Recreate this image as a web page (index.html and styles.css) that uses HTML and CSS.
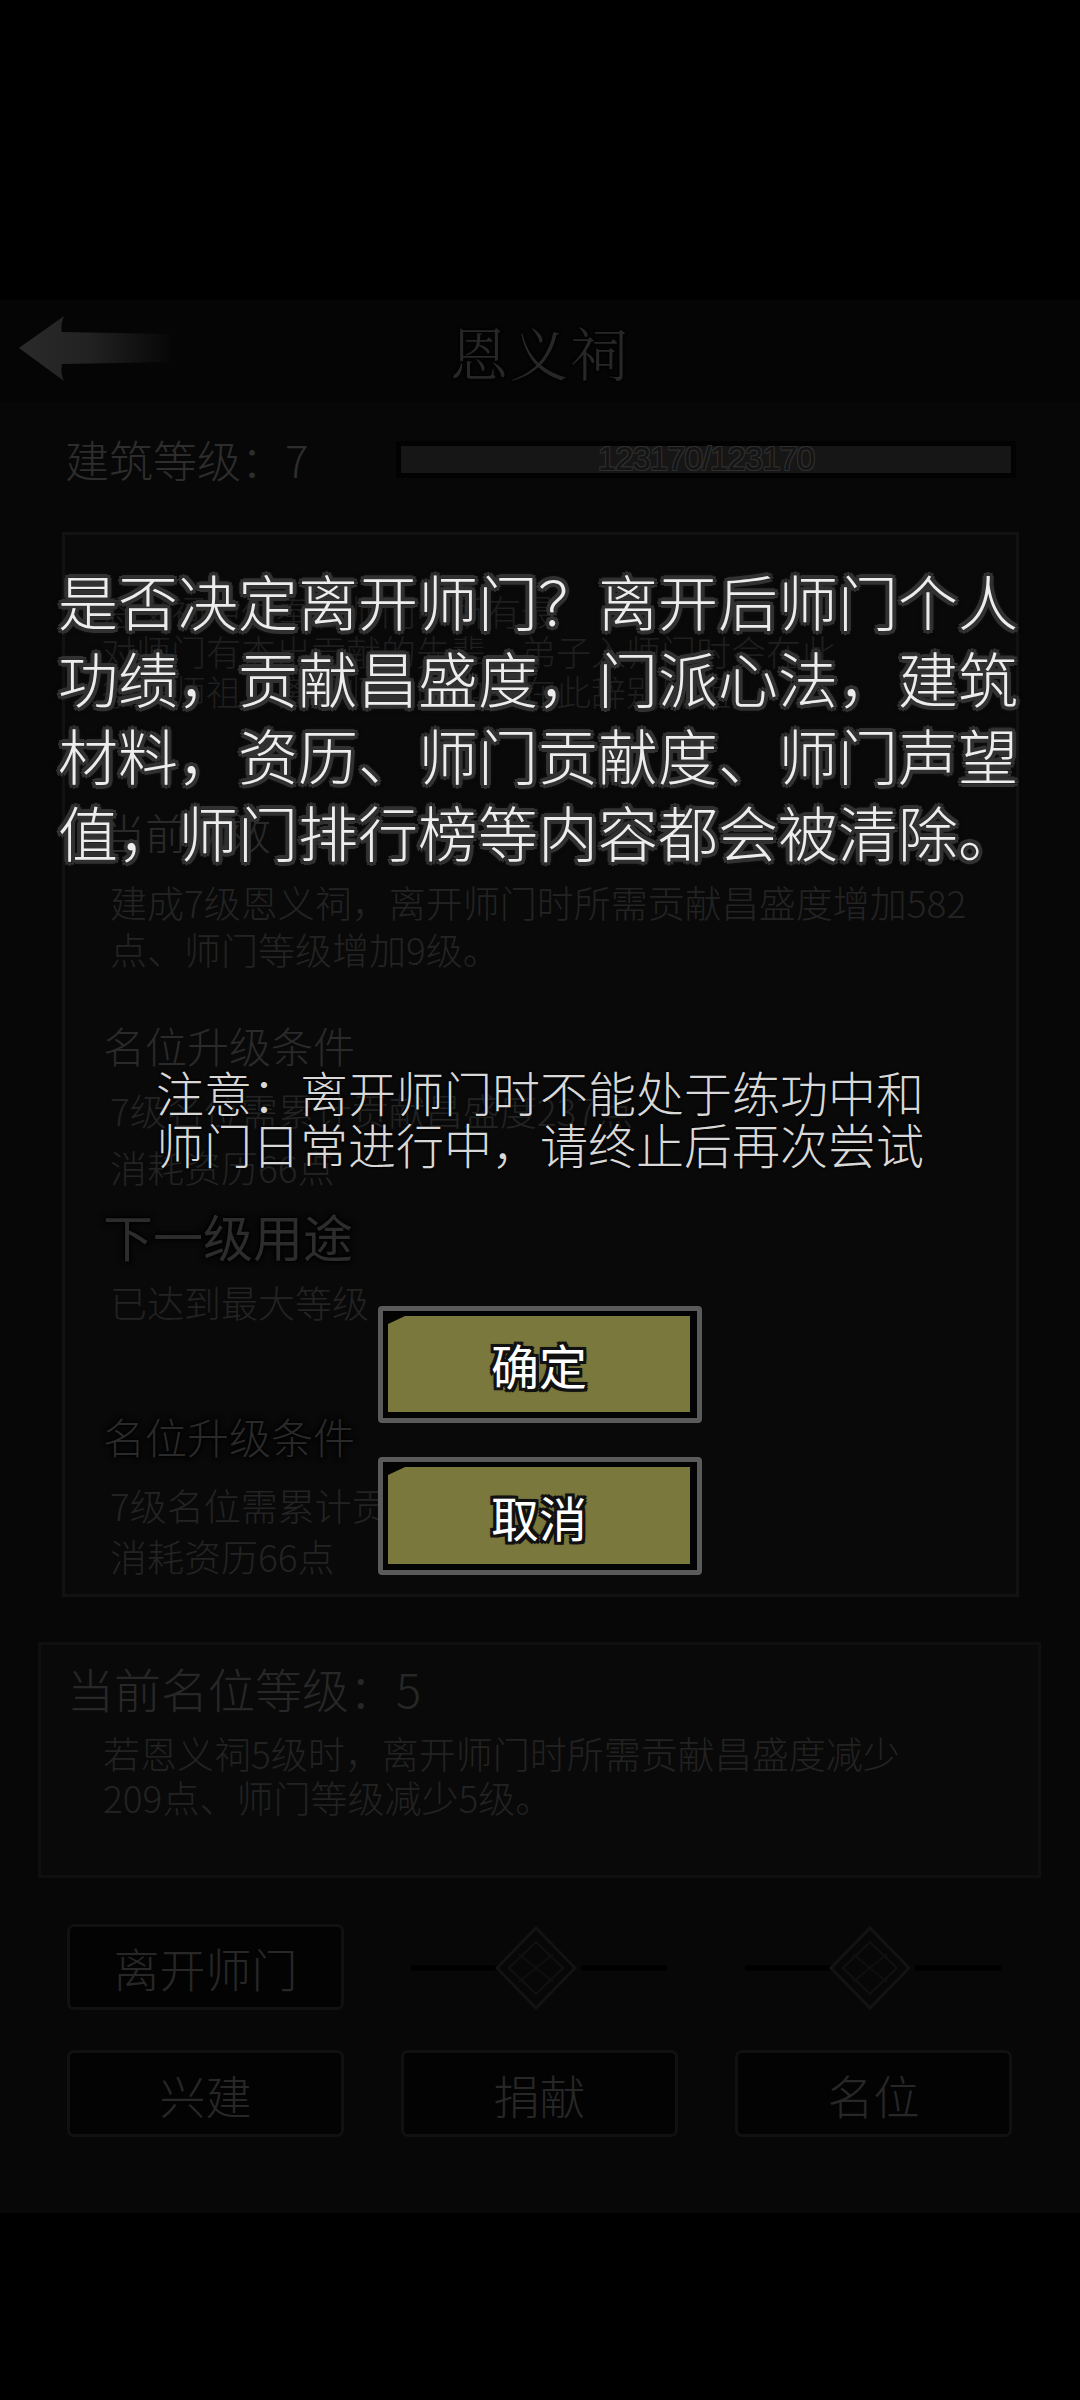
FILE: index.html
```html
<!DOCTYPE html>
<html lang="zh-CN">
<head>
<meta charset="utf-8">
<title>恩义祠</title>
<link rel="stylesheet" href="styles.css">
</head>
<body>
<div class="screen">
  <div class="statusbar"></div>
  <div class="game">
    <header class="hdr">
      <svg class="back" width="180" height="102" viewBox="0 0 180 102">
        <defs>
          <linearGradient id="ag" x1="0" y1="0" x2="1" y2="0">
            <stop offset="0" stop-color="#2a2a2a"/>
            <stop offset="0.45" stop-color="#222"/>
            <stop offset="1" stop-color="#070707"/>
          </linearGradient>
        </defs>
        <path d="M19 48 L64 16 Q60 26 62 32 L170 34 L170 62 L62 64 Q60 72 64 81 Z" fill="url(#ag)"/>
      </svg>
      <h1 class="title">恩义祠</h1>
      <span></span>
    </header>
    <main class="content">
      <div class="levelrow">
        <div class="lvl">建筑等级：7</div>
        <div class="bar"><span>123170/123170</span></div>
      </div>
      <section class="panel">
        <p class="intro">恩义祠中供奉着师门中所有最<br>对师门有杰出贡献的先辈。弟子入师门时会在此<br>祭拜师祖，离开师门时也会在此辞别师祖。</p>
        <h2 class="h h-effect">当前功效</h2>
        <p class="body b-effect">建成7级恩义祠，离开师门时所需贡献昌盛度增加582<br>点、师门等级增加9级。</p>
        <h2 class="h h-cond1">名位升级条件</h2>
        <p class="body b-c1a">7级名位需累计贡献昌盛度237点</p>
        <p class="body b-c1b">消耗资历66点</p>
        <h2 class="h halo h-next">下一级用途</h2>
        <p class="body b-next">已达到最大等级</p>
        <h2 class="h halo h-cond2">名位升级条件</h2>
        <p class="body b-c2a">7级名位需累计贡献昌盛度237点</p>
        <p class="body b-c2b">消耗资历66点</p>
      </section>
      <section class="panel2">
        <h2 class="rank">当前名位等级：5</h2>
        <p class="rankdesc">若恩义祠5级时，离开师门时所需贡献昌盛度减少<br>209点、师门等级减少5级。</p>
      </section>
      <div class="actions">
        <button class="act">离开师门</button>
        <svg class="divider" width="277" height="86" viewBox="0 0 277 86">
          <line x1="10" y1="44" x2="96" y2="44" stroke="#000" stroke-width="5"/>
          <line x1="180" y1="44" x2="266" y2="44" stroke="#000" stroke-width="5"/>
          <path d="M135 4 L174 44 L135 84 L96 44 Z" fill="none" stroke="#131313" stroke-width="3"/>
          <path d="M135 18 L162 44 L135 70 L108 44 Z" fill="none" stroke="#111" stroke-width="2"/>
          <path d="M118 30 L152 58 M152 30 L118 58" stroke="#0f0f0f" stroke-width="2"/>
        </svg>
        <svg class="divider" width="277" height="86" viewBox="0 0 277 86">
          <line x1="10" y1="44" x2="96" y2="44" stroke="#000" stroke-width="5"/>
          <line x1="180" y1="44" x2="266" y2="44" stroke="#000" stroke-width="5"/>
          <path d="M135 4 L174 44 L135 84 L96 44 Z" fill="none" stroke="#131313" stroke-width="3"/>
          <path d="M135 18 L162 44 L135 70 L108 44 Z" fill="none" stroke="#111" stroke-width="2"/>
          <path d="M118 30 L152 58 M152 30 L118 58" stroke="#0f0f0f" stroke-width="2"/>
        </svg>
        <button class="act">兴建</button>
        <button class="act">捐献</button>
        <button class="act">名位</button>
      </div>
    </main>
  </div>
</div>

<div class="overlay">
  <p class="msg">是否决定离开师门？离开后师门个人<br>功绩，贡献昌盛度，门派心法，建筑<br>材料，资历、师门贡献度、师门声望<br>值，师门排行榜等内容都会被清除。</p>
  <p class="note">注意：离开师门时不能处于练功中和<br>师门日常进行中，请终止后再次尝试</p>
  <button class="dlgbtn ok"><span class="face">确定</span></button>
  <button class="dlgbtn cancel"><span class="face">取消</span></button>
</div>
</body>
</html>
```

FILE: styles.css
```css
* { box-sizing: border-box; }

html, body {
  margin: 0;
  padding: 0;
}

body {
  width: 1080px;
  height: 2400px;
  overflow: hidden;
  background: #000;
  position: relative;
  font-family: "Noto Sans CJK SC", "Noto Sans", sans-serif;
  font-weight: 300;
}

p, h1, h2 { margin: 0; font-weight: 300; }

.statusbar {
  height: 300px;
  background: #000;
}

.game {
  height: 1913px;
  background: #060606;
}

/* header */
.hdr {
  height: 102px;
  display: grid;
  grid-template-columns: 1fr auto 1fr;
  align-items: center;
  background: #050505;
}

.back { display: block; }

.title {
  font-family: "Noto Serif CJK SC", "AR PL UKai CN", "Noto Sans CJK SC", serif;
  font-size: 58px;
  line-height: 60px;
  font-weight: 300;
  color: #272727;
  letter-spacing: 2px;
  text-shadow: 0 0 3px #000, 0 0 2px #000;
}

.content {
  height: 1811px;
  background: #070707;
  padding-top: 36px;
}

/* level row */
.levelrow {
  height: 42px;
  display: flex;
  align-items: center;
  padding: 0 64px 0 65px;
}

.lvl {
  width: 331px;
  flex: none;
  font-size: 44px;
  line-height: 42px;
  color: #2d2d2d;
  white-space: nowrap;
}

.bar {
  flex: 1;
  height: 37px;
  background: #161616;
  border: 5px solid #020202;
  display: flex;
  align-items: center;
  justify-content: center;
}

.bar span {
  font-family: "Liberation Sans", Arial, sans-serif;
  font-size: 33px;
  letter-spacing: -1px;
  color: #141414;
  text-shadow: -1px -1px 0 #2e2e2e, 1px -1px 0 #2e2e2e, -1px 1px 0 #2e2e2e, 1px 1px 0 #2e2e2e;
}

/* main panel */
.panel {
  margin: 52px 0 0 62px;
  width: 957px;
  height: 1065px;
  border: 3px solid #121212;
  background: #090909;
  padding-left: 38px;
  overflow: hidden;
}

.intro {
  margin-top: 56px;
  margin-left: -2px;
  font-size: 35px;
  line-height: 40px;
  color: #1f1f1f;
  white-space: nowrap;
}

.h {
  font-size: 42px;
  line-height: 50px;
  color: #2a2a2a;
  white-space: nowrap;
}

.halo {
  text-shadow: 0 0 4px #000, 0 0 7px #000, 0 0 2px #000;
}

.body {
  padding-left: 7px;
  font-size: 37px;
  line-height: 48px;
  color: #232323;
  white-space: nowrap;
}

.h-effect { margin-top: 96px; }
.b-effect { margin-top: 22px; line-height: 47px; }
.h-cond1 { margin-top: 47px; }
.b-c1a { margin-top: 16px; }
.b-c1b { margin-top: 9px; }
.h-next { margin-top: 16px; font-size: 50px; line-height: 56px; color: #2c2c2c; font-weight: 400; }
.b-next { margin-top: 15px; }
.h-cond2 { margin-top: 85px; }
.b-c2a { margin-top: 20px; }
.b-c2b { margin-top: 3px; }

/* second panel */
.panel2 {
  margin: 45px 0 0 38px;
  width: 1003px;
  height: 236px;
  border: 3px solid #0f0f0f;
  background: #090909;
  padding-left: 26px;
}

.rank {
  margin-top: 16px;
  font-size: 47px;
  line-height: 54px;
  color: #272727;
  white-space: nowrap;
}

.rankdesc {
  margin-top: 16px;
  padding-left: 36px;
  font-size: 37px;
  line-height: 44px;
  color: #222;
  white-space: nowrap;
}

/* bottom actions */
.actions {
  margin-top: 46px;
  padding-left: 67px;
  display: grid;
  grid-template-columns: repeat(3, 277px);
  grid-template-rows: 86px 87px;
  column-gap: 57px;
  row-gap: 40px;
}

.act {
  font-family: "Noto Sans CJK SC", sans-serif;
  font-size: 46px;
  font-weight: 300;
  color: #272727;
  background: #030303;
  border: 3px solid #111;
  border-radius: 7px;
  padding: 0;
  line-height: 1;
}

.divider { display: block; }

/* dialog overlay */
.overlay {
  position: absolute;
  left: 0;
  top: 0;
  width: 1080px;
  height: 2400px;
  display: flex;
  flex-direction: column;
  align-items: center;
}

.msg {
  margin-top: 561px;
  width: 964px;
  font-size: 60px;
  line-height: 77px;
  font-weight: 300;
  color: #ededed;
  white-space: nowrap;
  text-shadow:
    -3px -3px 0 #313131, 3px -3px 0 #313131, -3px 3px 0 #313131, 3px 3px 0 #313131,
    0 -4px 0 #313131, 0 4px 0 #313131, -4px 0 0 #313131, 4px 0 0 #313131,
    0 0 7px #2a2a2a;
}

.note {
  margin-top: 196px;
  font-size: 48px;
  line-height: 52px;
  font-weight: 300;
  color: #d8d8d8;
  text-align: center;
  white-space: nowrap;
  text-shadow: 0 0 3px #000, 0 0 2px #000;
}

.dlgbtn {
  width: 324px;
  height: 117px;
  border: 5px solid #5a5a5a;
  border-radius: 4px;
  background: #030303;
  padding: 5px 7px 6px 5px;
  display: flex;
}

.ok { margin-top: 137px; }
.cancel { margin-top: 34px; height: 118px; }

.face {
  flex: 1;
  background: #7a783d;
  clip-path: polygon(17px 0, 100% 0, 100% 100%, 0 100%, 0 8px);
  display: flex;
  align-items: center;
  justify-content: center;
  font-family: "Noto Sans CJK SC", sans-serif;
  font-size: 48px;
  font-weight: 400;
  color: #fff;
  text-shadow:
    -3px -3px 0 #111, 3px -3px 0 #111, -3px 3px 0 #111, 3px 3px 0 #111,
    0 -3px 0 #111, 0 3px 0 #111, -3px 0 0 #111, 3px 0 0 #111,
    0 0 4px #000;
}
```
